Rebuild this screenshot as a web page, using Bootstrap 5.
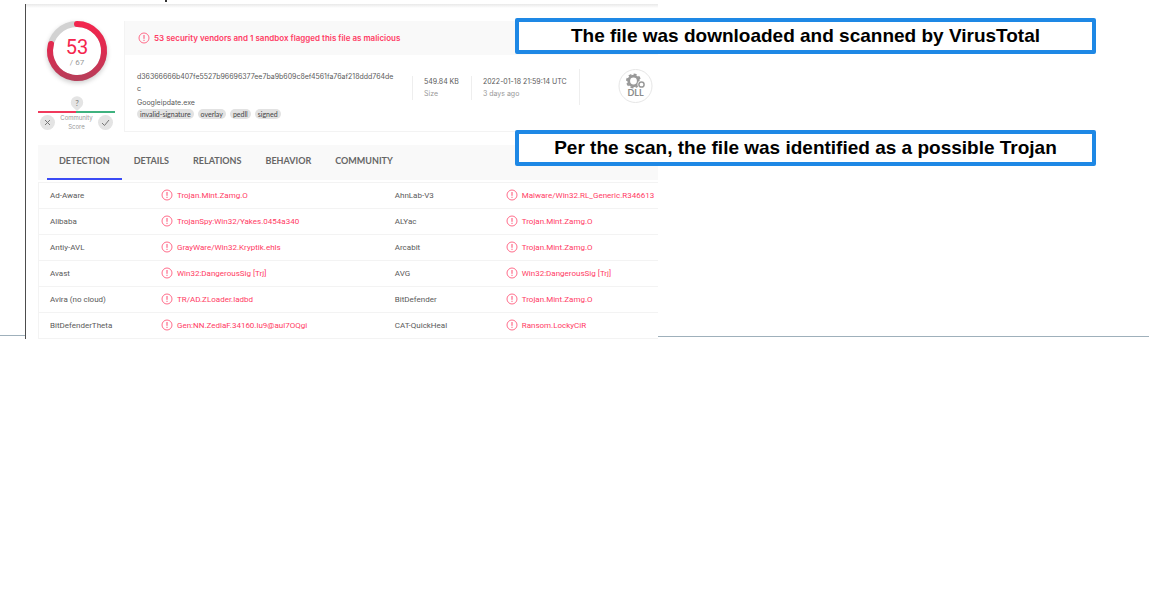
<!DOCTYPE html>
<html lang="en">
<head>
<meta charset="utf-8">
<meta name="viewport" content="width=device-width, initial-scale=1">
<title>VirusTotal scan result</title>
<link href="https://cdn.jsdelivr.net/npm/bootstrap@5.3.0/dist/css/bootstrap.min.css" rel="stylesheet">
<style>
  :root { --vt-red: #ff3b64; --vt-ink: #5a5a5a; --vt-mute: #999; --vt-line: #f3f3f3; --rule: #9fb0bb; }
  body { font-family: Inter, "Liberation Sans", sans-serif; font-size: 7px; line-height: 12px; color: var(--vt-ink); background: #fff; }
  .slide { display: grid; grid-template-columns: 25px minmax(0, 633fr) minmax(0, 504fr); }
  .slide-rule { align-self: end; border-bottom: 1px solid var(--rule); margin-bottom: 3px; }
  .slide-rule.end-rule { margin-right: 13px; margin-bottom: 2px; }
  .title-tail { left: 165px; top: 0; width: 2px; height: 2px; background: #333; }
  .report { margin-top: 4px; border-left: 1px solid #4d4d4d; padding: 17px 0 0 12px; overflow: hidden;
            background: linear-gradient(#e9e9e9, #fff 4px); }
  .score-col { width: 77px; }
  .gauge { width: 76px; height: 76px; margin-top: -8px; }
  .unknown-pin { padding-top: 7px; }
  .community-bar { height: 2px; background: linear-gradient(90deg, #f03a5c 50%, #3fb27f 50%); }
  .vote-row { padding: 0 2px; }
  .vote { width: 15px; height: 15px; padding: 0; border: 0; border-radius: 50%; background: #e4e4e4; display: flex; }
  .caption { font-size: 6px; line-height: 9px; color: var(--vt-mute); }
  .file-card { margin-left: 9px; border: 1px solid var(--vt-line); border-top: 0; border-right: 0; height: 111px; }
  .verdict { background: #f9f9f9; height: 34px; padding-left: 13px; gap: 4px; color: var(--vt-red); font-weight: 600; font-size: 8px; }
  .mark-icon { width: 12px; height: 12px; flex: none; }
  .file-name { width: 275px; padding: 0 6px 0 0; }
  .file-alias { padding-top: 2px; }
  .tag { font: 7px/10px Lato, sans-serif; background: #e2e2e2; border-radius: 5px; padding: 0 3px; color: #444; }
  .fact { border-left: 1px solid #eee; padding: 0 12px 0 11px; height: 24px; margin-top: 5px; }
  .fact span { color: var(--vt-mute); }
  .type-cell { border-left: 1px solid #eee; height: 36px; padding-left: 38px; margin-top: -2px; }
  .vt-tabs { background: #f9f9f9; margin-top: 13px; height: 35px; padding-left: 9px; border: 0; flex-wrap: nowrap; }
  .vt-tabs .nav-link { font: 700 9px/32px Lato, sans-serif; color: #666; padding: 0 12px; border: 0; border-bottom: 2px solid transparent; border-radius: 0; margin: 0; }
  .vt-tabs .nav-link.active { background: none; color: #666; border-bottom-color: #3b4bf5; }
  .results { table-layout: fixed; width: 100%; margin: 2px 0 0; font: 8px/12px Roboto, sans-serif; border-left: 1px solid var(--vt-line); border-top: 1px solid var(--vt-line); border-collapse: separate; border-spacing: 0; }
  .results td { padding: 0 0 0 11px; height: 26px; border-bottom: 1px solid var(--vt-line); white-space: nowrap; vertical-align: middle; }
  .results td.hit { color: var(--vt-red); padding-left: 0; }
  .results .mark-icon { margin-right: 4px; margin-top: -1px; }
  .results .w-name { width: 19.7%; }
  .results .w-hit { width: 36%; }
  .callouts { left: 515px; right: 66px; top: 18px; display: grid; gap: 76px; }
  .callout-box { border: 4px solid #1e88e5; border-radius: 2px; background: #fff; color: #000; font: 700 19px/28px "Liberation Sans", sans-serif; text-align: center; }
</style>
<script src="https://cdn.jsdelivr.net/npm/bootstrap@5.3.0/dist/js/bootstrap.bundle.min.js"></script>
</head>
<body>
<svg class="d-none" aria-hidden="true">
  <symbol id="alert" viewBox="0 0 12 12"><circle cx="6" cy="6" r="5" fill="none" stroke="#ff5c7e" stroke-width=".9"/><path d="M6 3v3.800M6 7.800v1.100" stroke="#ff4a70" stroke-width="1"/></symbol>
</svg>
<main class="slide position-relative">
  <div class="slide-rule"></div>
  <section class="report">
    <div class="d-flex align-items-start">
      <div class="score-col flex-shrink-0 text-center">
        <svg class="gauge d-block mx-auto" viewBox="0 0 76 76" role="img" aria-label="53 of 67">
          <defs>
            <linearGradient id="ring" gradientUnits="userSpaceOnUse" x1="0" y1="8" x2="0" y2="68"><stop offset="0" stop-color="#f5254d"/><stop offset=".5" stop-color="#dc2c50"/><stop offset="1" stop-color="#b53f5a"/></linearGradient>
            <filter id="soft" x="-30%" y="-30%" width="160%" height="160%"><feGaussianBlur stdDeviation="2.500"/></filter>
          </defs>
          <circle cx="38" cy="40" r="30" fill="#000" opacity=".2" filter="url(#soft)"/>
          <circle cx="38" cy="38" r="27" fill="#fff" stroke="#d2d2d2" stroke-width="6"/>
          <path d="M38 11A27 27 0 1 1 12 31" fill="none" stroke="url(#ring)" stroke-width="6" stroke-linecap="round"/>
          <text x="38" y="41" text-anchor="middle" font-family="Roboto" font-size="20" fill="#f5254d">53</text>
          <text x="38" y="52" text-anchor="middle" font-family="Roboto" font-size="8" fill="#999">/ 67</text>
        </svg>
        <div class="unknown-pin">
          <svg class="d-block mx-auto" width="14" height="15" viewBox="0 0 14 15" role="img" aria-label="Unknown"><path d="M7 15 2.500 10.800A6.200 6.200 0 1 1 11.500 10.800Z" fill="#e4e4e4"/><text x="7" y="9.500" text-anchor="middle" font-family="Lato" font-size="8" fill="#777">?</text></svg>
        </div>
        <div class="community-bar"></div>
        <div class="vote-row d-flex justify-content-between align-items-center">
          <button class="vote" type="button" aria-label="Vote malicious"><svg viewBox="0 0 15 15"><path d="m5 5 5 5m0-5-5 5" stroke="#777" stroke-width="1"/></svg></button>
          <div class="caption">Community<br>Score</div>
          <button class="vote" type="button" aria-label="Vote harmless"><svg viewBox="0 0 15 15"><path d="m4 8 2.500 2.500L11 5" fill="none" stroke="#777" stroke-width="1"/></svg></button>
        </div>
      </div>
      <div class="file-card flex-grow-1">
        <div class="verdict d-flex align-items-center"><svg class="mark-icon"><use href="#alert"/></svg>53 security vendors and 1 sandbox flagged this file as malicious</div>
        <div class="d-flex ms-2 ps-1 pt-3">
          <div class="file-name flex-shrink-0 text-break">
            <div>d36366666b407fe5527b96696377ee7ba9b609c8ef4561fa76af218ddd764de<br>c</div>
            <div class="file-alias">Googleipdate.exe</div>
            <div class="d-flex gap-1"><span class="tag">invalid-signature</span><span class="tag">overlay</span><span class="tag">pedll</span><span class="tag">signed</span></div>
          </div>
          <div class="fact text-nowrap">549.84 KB<br><span>Size</span></div>
          <div class="fact text-nowrap">2022-01-18 21:59:14 UTC<br><span>3 days ago</span></div>
          <div class="type-cell">
            <svg class="d-block" width="35" height="35" viewBox="0 0 35 35" role="img" aria-label="DLL file">
              <circle cx="17.500" cy="17" r="16.500" fill="#fff" stroke="#e6e6e6"/>
              <circle cx="15.500" cy="12" r="4.800" fill="none" stroke="#999" stroke-width="2.800"/>
              <circle cx="15.500" cy="12" r="6.600" fill="none" stroke="#999" stroke-width="1.800" stroke-dasharray="2.900 2.280"/>
              <circle cx="23.500" cy="15.500" r="4" fill="#fff"/>
              <circle cx="23.500" cy="15.500" r="2.600" fill="#fff" stroke="#999" stroke-width="1.500"/>
              <text x="17.500" y="27" text-anchor="middle" font-family="Lato" font-weight="700" font-size="9" fill="#8c8c8c">DLL</text>
            </svg>
          </div>
        </div>
      </div>
    </div>
    <nav class="nav nav-tabs vt-tabs">
      <a class="nav-link active" href="#detection">DETECTION</a>
      <a class="nav-link" href="#details">DETAILS</a>
      <a class="nav-link" href="#relations">RELATIONS</a>
      <a class="nav-link" href="#behavior">BEHAVIOR</a>
      <a class="nav-link" href="#community">COMMUNITY</a>
    </nav>
    <table class="results" id="detection">
      <colgroup><col class="w-name"><col class="w-hit"><col class="w-name"><col></colgroup>
      <tbody>
        <tr><td>Ad-Aware</td><td class="hit"><svg class="mark-icon"><use href="#alert"/></svg>Trojan.Mint.Zamg.O</td><td>AhnLab-V3</td><td class="hit"><svg class="mark-icon"><use href="#alert"/></svg>Malware/Win32.RL_Generic.R346613</td></tr>
        <tr><td>Alibaba</td><td class="hit"><svg class="mark-icon"><use href="#alert"/></svg>TrojanSpy:Win32/Yakes.0454a340</td><td>ALYac</td><td class="hit"><svg class="mark-icon"><use href="#alert"/></svg>Trojan.Mint.Zamg.O</td></tr>
        <tr><td>Antiy-AVL</td><td class="hit"><svg class="mark-icon"><use href="#alert"/></svg>GrayWare/Win32.Kryptik.ehls</td><td>Arcabit</td><td class="hit"><svg class="mark-icon"><use href="#alert"/></svg>Trojan.Mint.Zamg.O</td></tr>
        <tr><td>Avast</td><td class="hit"><svg class="mark-icon"><use href="#alert"/></svg>Win32:DangerousSig [Trj]</td><td>AVG</td><td class="hit"><svg class="mark-icon"><use href="#alert"/></svg>Win32:DangerousSig [Trj]</td></tr>
        <tr><td>Avira (no cloud)</td><td class="hit"><svg class="mark-icon"><use href="#alert"/></svg>TR/AD.ZLoader.ladbd</td><td>BitDefender</td><td class="hit"><svg class="mark-icon"><use href="#alert"/></svg>Trojan.Mint.Zamg.O</td></tr>
        <tr><td>BitDefenderTheta</td><td class="hit"><svg class="mark-icon"><use href="#alert"/></svg>Gen:NN.ZedlaF.34160.lu9@aul7OQgi</td><td>CAT-QuickHeal</td><td class="hit"><svg class="mark-icon"><use href="#alert"/></svg>Ransom.LockyCiR</td></tr>
      </tbody>
    </table>
  </section>
  <div class="slide-rule end-rule"></div>
  <span class="title-tail position-absolute"></span>
  <div class="callouts position-absolute">
    <div class="callout-box">The file was downloaded and scanned by VirusTotal</div>
    <div class="callout-box">Per the scan, the file was identified as a possible Trojan</div>
  </div>
</main>
</body>
</html>
